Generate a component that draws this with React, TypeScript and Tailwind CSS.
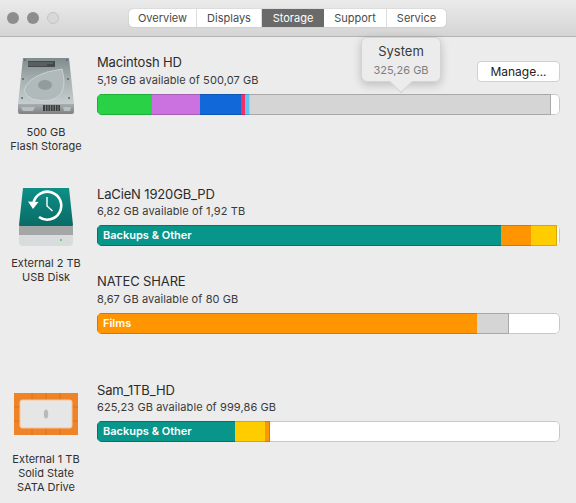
import type { ReactNode } from "react";

const tabs = [
  { name: "Overview", className: "w-[68px]" },
  { name: "Displays", className: "w-[65px]" },
  { name: "Storage", className: "w-[62px]" },
  { name: "Support", className: "w-[63px]" },
  { name: "Service", className: "w-[59px]" },
];

const font = "font-['Inter','Liberation_Sans',sans-serif]";

type Segment = { className: string; label?: string };

function Bar({ segments }: { segments: Segment[] }) {
  return (
    <div className="flex h-[21px] w-[463px] overflow-hidden rounded-[5px]">
      {segments.map((s, i) => (
        <div
          key={i}
          className={`flex shrink-0 items-center border-y text-[11px] font-semibold text-white first:border-l ${s.className}`}
        >
          {s.label && <span className="pl-[5px]">{s.label}</span>}
        </div>
      ))}
      <div className="flex-1 rounded-r-[5px] border-y border-r border-[#c8c8c8] bg-white" />
    </div>
  );
}

function HardDiskIcon() {
  return (
    <svg width="58" height="60" viewBox="0 0 58 60">
      <defs>
        <linearGradient id="hd" x1="0" y1="0" x2="0" y2="1">
          <stop offset="0" stopColor="#7f8b8d" />
          <stop offset="0.5" stopColor="#a8b2b3" />
          <stop offset="1" stopColor="#c6cdce" />
        </linearGradient>
        <linearGradient id="hdbase" x1="0" y1="0" x2="0" y2="1">
          <stop offset="0" stopColor="#a9aeaf" />
          <stop offset="1" stopColor="#7d8182" />
        </linearGradient>
      </defs>
      <path d="M6 1 H52 L57 47 H1 Z" fill="url(#hd)" />
      <path d="M1 47 H57 V55 Q57 57 55 57 H3 Q1 57 1 55 Z" fill="url(#hdbase)" />
      <rect x="11" y="4" width="27" height="6" fill="#45494a" />
      <path d="M11 6 H36 M11 8 H30" stroke="#8b9091" strokeWidth="0.6" />
      <path d="M45 12 Q52 38 34 43 Q12 46 7 34 Q9 22 30 15 Z" fill="#b0babb" stroke="#d8dddd" strokeWidth="0.7" />
      <ellipse cx="28" cy="28" rx="7" ry="5" fill="#929c9d" />
      <path d="M26 48 H43 V54 H26 Z" fill="#3b3d3e" />
      <path d="M28.500 48 V54 M31 48 V54 M33.500 48 V54 M36 48 V54 M38.500 48 V54 M41 48 V54" stroke="#9a9e9f" strokeWidth="0.7" />
      <path d="M4 50 H18 L16 54 H6 Z" fill="#b9bebf" />
      <path d="M46 50 H54 L53 54 H47 Z" fill="#b9bebf" />
      <circle cx="8" cy="3" r="0.8" fill="#4c5455" />
      <circle cx="50" cy="3" r="0.8" fill="#4c5455" />
      <circle cx="6" cy="22" r="1" fill="#5e6667" />
      <circle cx="51" cy="22" r="1" fill="#5e6667" />
      <circle cx="5" cy="41" r="1" fill="#5e6667" />
      <circle cx="52" cy="41" r="1" fill="#5e6667" />
    </svg>
  );
}

function TimeMachineIcon() {
  return (
    <svg width="56" height="60" viewBox="0 0 56 60">
      <defs>
        <linearGradient id="tm" x1="0" y1="0" x2="0" y2="1">
          <stop offset="0" stopColor="#0d8f87" />
          <stop offset="1" stopColor="#0a6b66" />
        </linearGradient>
      </defs>
      <path d="M5 0 H51 L55 37 Q55 38 54 38 H2 Q1 38 1 37 Z" fill="url(#tm)" />
      <path d="M1 38 H55 V47 H1 Z" fill="#a5a6a6" />
      <path d="M1 47 H55 V54 Q55 58 51 58 H5 Q1 58 1 54 Z" fill="#d9dcdc" />
      <circle cx="43" cy="52" r="1" fill="#57c25f" />
      <path d="M15.5 15 A14 14 0 1 1 21 29" fill="none" stroke="white" strokeWidth="2.6" />
      <path d="M10 13.500 L20.500 14 L15 21 Z" fill="white" />
      <path d="M29 9 V18 L34.500 23" fill="none" stroke="white" strokeWidth="1.4" />
    </svg>
  );
}

function LacieIcon() {
  return (
    <svg width="64" height="42" viewBox="0 0 64 42">
      <rect width="64" height="42" fill="#ee8327" />
      <path d="M18 0 V7 M32 0 V7 M46 0 V7 M18 35 V42 M32 35 V42 M46 35 V42 M0 14 H6 M0 28 H6 M58 14 H64 M58 28 H64" stroke="#d77218" strokeWidth="0.8" />
      <rect x="6" y="7" width="52" height="28" rx="2" fill="#e6e6e6" stroke="#f7c59b" strokeWidth="1" />
      <ellipse cx="32" cy="21" rx="2.200" ry="4.500" fill="#b9b9b9" />
    </svg>
  );
}

function Device({ icon, lines, className = "" }: { icon: ReactNode; lines: string[]; className?: string }) {
  return (
    <div className={`flex w-[92px] shrink-0 flex-col items-center ${className}`}>
      <div className="flex h-[66px] items-center justify-center">{icon}</div>
      <div className="mt-[5px] text-center text-[11px] leading-[14px] text-[#303030]">
        {lines.map((l) => (
          <div key={l}>{l}</div>
        ))}
      </div>
    </div>
  );
}

function Volume({
  name,
  info,
  segments,
  action,
  tight,
}: {
  name: string;
  info: string;
  segments: Segment[];
  action?: ReactNode;
  tight?: boolean;
}) {
  return (
    <div>
      <div className={`flex w-[463px] items-start justify-between ${tight ? "h-[40px]" : "h-[41px]"}`}>
        <div>
          <div className="text-[13px] leading-[18px] tracking-[-0.15px] text-[#2b2b2b]">{name}</div>
          <div className={`text-[11px] leading-[14px] tracking-[0.1px] text-[#3a3a3a] ${tight ? "mt-[1px]" : "mt-[2px]"}`}>
            {info}
          </div>
        </div>
        {action}
      </div>
      <Bar segments={segments} />
    </div>
  );
}

export default function App() {
  return (
    <div className={`relative h-[503px] w-[576px] overflow-hidden bg-[#ececec] ${font}`}>
      {/* Title bar */}
      <div className="flex h-[37px] items-center border-b border-[#b4b4b4] bg-gradient-to-b from-[#ebebeb] to-[#d4d4d4] pl-[7px]">
        <div className="flex gap-[8px]">
          <div className="h-[12px] w-[12px] rounded-full bg-[#8d8d90]" />
          <div className="h-[12px] w-[12px] rounded-full bg-[#8d8d90]" />
          <div className="h-[12px] w-[12px] rounded-full border border-[#c4c4c4] bg-[#d8d8d8]" />
        </div>
        <div className="ml-[70px] flex h-[18px] overflow-hidden rounded-[4px] bg-white shadow-[0_0_1px_rgba(0,0,0,0.4)]">
          {tabs.map((t) => (
            <div
              key={t.name}
              className={
                t.name === "Storage"
                  ? `flex items-center justify-center bg-[#6a6a6a] text-[11px] text-white ${t.className}`
                  : `flex items-center justify-center border-r border-[#dcdcdc] text-[11px] text-[#4a4a4a] last:border-r-0 ${t.className}`
              }
            >
              {t.name}
            </div>
          ))}
        </div>
      </div>

      {/* Macintosh HD */}
      <div className="flex pt-[16px]">
        <Device className="mt-[1px]" icon={<HardDiskIcon />} lines={["500 GB", "Flash Storage"]} />
        <div className="ml-[5px]">
          <Volume
            name="Macintosh HD"
            info="5,19 GB available of 500,07 GB"
            action={
              <button className="mt-[8px] h-[21px] w-[83px] rounded-[4px] border border-[#d0d0d0] bg-white text-[12px] leading-none text-[#222]">
                Manage...
              </button>
            }
            segments={[
              { className: "w-[55px] border-[#20ad39] bg-[#28d145]" },
              { className: "w-[48px] border-[#a75fb6] bg-[#cb72e0]" },
              { className: "w-[41px] border-[#0c55b0] bg-[#1068d9]" },
              { className: "w-[4px] border-[#c02450] bg-[#f62f62]" },
              { className: "w-[4px] border-[#46a6d6] bg-[#5bc8f5]" },
              { className: "w-[1px] border-[#d9ae00] bg-[#ffcc00]" },
              { className: "w-[301px] border-r border-[#a8a8a8] bg-[#d5d5d5]" },
            ]}
          />
        </div>
      </div>

      {/* LaCie and NATEC */}
      <div className="mt-[32px] flex">
        <Device icon={<TimeMachineIcon />} lines={["External 2 TB", "USB Disk"]} />
        <div className="ml-[5px] flex flex-col gap-[26px]">
          <Volume
            tight
            name="LaCieN 1920GB_PD"
            info="6,82 GB available of 1,92 TB"
            segments={[
              { className: "w-[404px] border-[#07726b] bg-[#08958a]", label: "Backups & Other" },
              { className: "w-[30px] border-[#d07c00] bg-[#ff9500]" },
              { className: "w-[26px] border-r border-[#d9a800] bg-[#ffcc00]" },
            ]}
          />
          <Volume
            name="NATEC SHARE"
            info="8,67 GB available of 80 GB"
            segments={[
              { className: "w-[380px] border-[#d07c00] bg-[#ff9500]", label: "Films" },
              { className: "w-[32px] border-r border-[#a8a8a8] bg-[#d5d5d5]" },
            ]}
          />
        </div>
      </div>

      {/* Sam */}
      <div className="mt-[47px] flex">
        <Device icon={<LacieIcon />} lines={["External 1 TB", "Solid State", "SATA Drive"]} />
        <div className="ml-[5px]">
          <Volume
            tight
            name="Sam_1TB_HD"
            info="625,23 GB available of 999,86 GB"
            segments={[
              { className: "w-[138px] border-[#07726b] bg-[#08958a]", label: "Backups & Other" },
              { className: "w-[30px] border-[#d9a800] bg-[#ffcc00]" },
              { className: "w-[5px] border-r border-[#d07c00] bg-[#ff9500]" },
            ]}
          />
        </div>
      </div>

      {/* System tooltip */}
      <div className="absolute left-[361px] top-[37px] z-10 flex h-[45px] w-[80px] flex-col items-center rounded-[6px] border border-[#d4d4d4] bg-[#ececec] pt-[5px] shadow-[0_3px_10px_rgba(0,0,0,0.2)]">
        <div className="absolute left-[31px] top-[36px] h-[16px] w-[16px] rotate-45 border-b border-r border-[#d4d4d4] bg-[#ececec]" />
        <div className="relative text-[13px] leading-[17px] text-[#3a3a3a]">System</div>
        <div className="relative mt-[3px] text-[11px] leading-[14px] text-[#808080]">325,26 GB</div>
      </div>
    </div>
  );
}
